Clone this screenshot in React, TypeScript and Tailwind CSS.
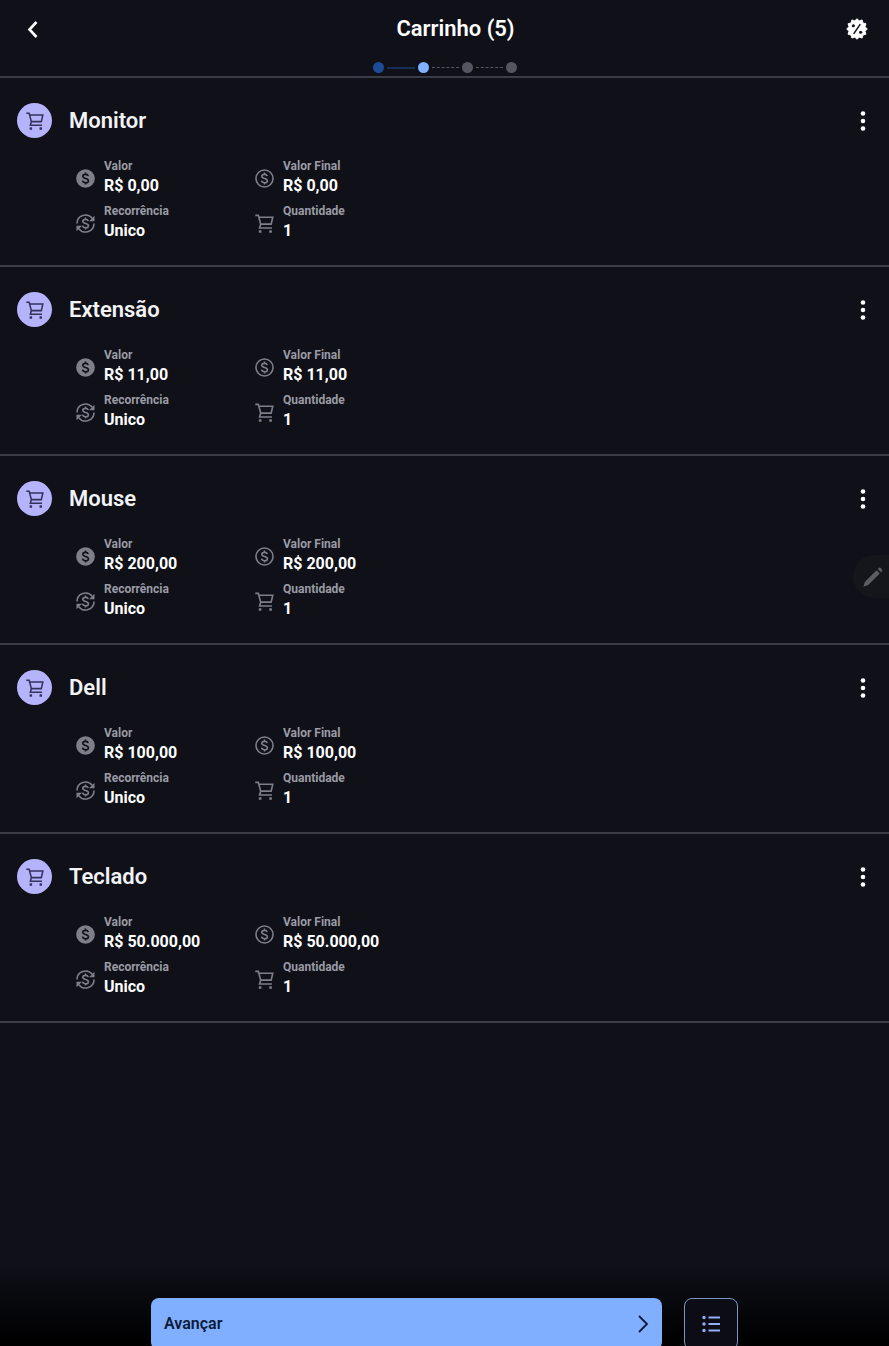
import type { ReactNode } from 'react';

interface CartItem {
  id: number;
  name: string;
  price: string;
  finalPrice: string;
  recurrence: string;
  quantity: number;
}

interface IconProps {
  className?: string;
}

const items: CartItem[] = [
  { id: 1, name: 'Monitor', price: 'R$ 0,00', finalPrice: 'R$ 0,00', recurrence: 'Unico', quantity: 1 },
  { id: 2, name: 'Extensão', price: 'R$ 11,00', finalPrice: 'R$ 11,00', recurrence: 'Unico', quantity: 1 },
  { id: 3, name: 'Mouse', price: 'R$ 200,00', finalPrice: 'R$ 200,00', recurrence: 'Unico', quantity: 1 },
  { id: 4, name: 'Dell', price: 'R$ 100,00', finalPrice: 'R$ 100,00', recurrence: 'Unico', quantity: 1 },
  { id: 5, name: 'Teclado', price: 'R$ 50.000,00', finalPrice: 'R$ 50.000,00', recurrence: 'Unico', quantity: 1 },
];

const dollar =
  'M15.5 9c-.4-1.4-1.6-2.2-3.4-2.2-2 0-3.5 1-3.5 2.5 0 1.7 1.6 2.2 3.5 2.7 2 .5 3.6 1.1 3.6 2.8 0 1.6-1.5 2.6-3.6 2.6-2 0-3.5-1-3.8-2.6M12 4.5v2.3M12 17.4v2.3';

function CartIcon({ className }: IconProps) {
  return (
    <svg viewBox="0 0 20 20" className={className} fill="none" stroke="currentColor" strokeWidth="1.7" aria-hidden="true">
      <path d="M.3 1.4h3.2L6 10.700h11l1.700-7.300H4.100" />
      <path d="M6 10.700 4.800 14.700h13" />
      <rect x="4" y="17" width="2.800" height="2.800" rx=".6" fill="currentColor" stroke="none" />
      <rect x="15" y="17" width="2.800" height="2.800" rx=".6" fill="currentColor" stroke="none" />
    </svg>
  );
}

function DollarFilledIcon({ className }: IconProps) {
  return (
    <svg viewBox="0 0 24 24" className={className} fill="none" aria-hidden="true">
      <circle cx="12" cy="12" r="11.8" fill="currentColor" />
      <path d={dollar} stroke="#0f1018" strokeWidth="2" />
    </svg>
  );
}

function DollarIcon({ className }: IconProps) {
  return (
    <svg viewBox="0 0 24 24" className={className} fill="none" stroke="currentColor" strokeWidth="2" aria-hidden="true">
      <circle cx="12" cy="12" r="10.8" />
      <path d={dollar} />
    </svg>
  );
}

function RecurrenceIcon({ className }: IconProps) {
  return (
    <svg viewBox="0 0 24 24" className={className} fill="none" stroke="currentColor" strokeWidth="2" aria-hidden="true">
      <path d="M1.2 12A10.8 10.8 0 0 1 20.5 5.5" />
      <path d="M22.8 12A10.8 10.8 0 0 1 3.5 18.5" />
      <path d="M23.4 2.2v7h-7zM.6 21.8v-7h7z" fill="currentColor" stroke="none" />
      <path d={dollar} />
    </svg>
  );
}

function DiscountIcon({ className }: IconProps) {
  return (
    <svg viewBox="0 0 24 24" className={className} aria-hidden="true">
      <path
        d="m12 .8 2.4 2.3 3.2-1 .9 3.3 3.3.9-1 3.2 2.4 2.5-2.4 2.5 1 3.2-3.3.9-.9 3.3-3.2-1-2.4 2.3-2.4-2.3-3.2 1-.9-3.3-3.3-.9 1-3.2L.8 12l2.4-2.5-1-3.2 3.3-.9.9-3.3 3.2 1z"
        fill="currentColor"
        stroke="currentColor"
        strokeLinejoin="round"
      />
      <path d="M15.6 6.6 8.4 17.4" stroke="#0f1018" strokeWidth="1.6" />
      <circle cx="8" cy="8.4" r="1.7" fill="#0f1018" />
      <circle cx="16" cy="15.6" r="1.7" fill="#0f1018" />
    </svg>
  );
}

function Steps() {
  return (
    <div className="flex items-center justify-center" role="img" aria-label="Etapa 2 de 4">
      <span className="size-[11px] rounded-full bg-[#1d4b96]" />
      <span className="mx-[3px] w-7 border-t-2 border-[#172d59]" />
      <span className="size-[11px] rounded-full bg-[#82b1ff]" />
      <span className="mx-[3px] w-[27px] border-t border-dashed border-[#55555f]" />
      <span className="size-[11px] rounded-full bg-[#55555f]" />
      <span className="mx-[3px] w-[27px] border-t border-dashed border-[#55555f]" />
      <span className="size-[11px] rounded-full bg-[#55555f]" />
    </div>
  );
}

function Detail({ icon, label, value }: { icon: ReactNode; label: string; value: string | number }) {
  return (
    <div className="flex items-center gap-[9px] text-[#7f7f8a]">
      {icon}
      <div>
        <dt className="text-xs leading-4 font-bold text-[#9b9ba5]">{label}</dt>
        <dd className="text-base leading-6 font-bold text-white">{value}</dd>
      </div>
    </div>
  );
}

function CartRow({ item }: { item: CartItem }) {
  return (
    <li className="border-b-2 border-[#3c3c46] pt-[25px] pb-[22px]">
      <div className="flex items-center pr-3 pl-[17px]">
        <span className="flex size-[35px] items-center justify-center rounded-full bg-[#b5b3fc] text-[#33335a]">
          <CartIcon className="size-[18px]" />
        </span>
        <h2 className="ml-[17px] flex-1 text-[22px] leading-7 font-semibold text-[#f3f3f6]">{item.name}</h2>
        <button type="button" aria-label={`Opções de ${item.name}`} className="flex h-7 w-7 items-center justify-center text-white">
          <svg viewBox="0 0 6 20" className="h-5 w-[6px]" fill="currentColor" aria-hidden="true">
            <circle cx="3" cy="2.5" r="2.3" />
            <circle cx="3" cy="10" r="2.3" />
            <circle cx="3" cy="17.5" r="2.3" />
          </svg>
        </button>
      </div>
      <dl className="mt-5 ml-[76px] grid max-w-[358px] grid-cols-2 gap-y-[5px]">
        <Detail icon={<DollarFilledIcon className="size-[19px]" />} label="Valor" value={item.price} />
        <Detail icon={<DollarIcon className="size-[19px]" />} label="Valor Final" value={item.finalPrice} />
        <Detail icon={<RecurrenceIcon className="size-[19px]" />} label="Recorrência" value={item.recurrence} />
        <Detail icon={<CartIcon className="size-[19px]" />} label="Quantidade" value={item.quantity} />
      </dl>
    </li>
  );
}

function App() {
  return (
    <div className="min-h-screen bg-[#0f1018] pb-20 font-['Roboto',sans-serif] text-white">
      <header className="border-b-2 border-[#3c3c46] pt-3 pb-[3px]">
        <div className="flex items-center justify-between px-[21px]">
          <button type="button" aria-label="Voltar" className="flex h-[34px] w-6 items-center justify-center">
            <svg viewBox="0 0 12 18" className="h-[18px] w-3" fill="none" stroke="currentColor" strokeWidth="2.6" aria-hidden="true">
              <path d="m9.500 2-7 7.500 7 7.500" />
            </svg>
          </button>
          <h1 className="ml-5 text-[22px] leading-[34px] font-semibold">Carrinho (5)</h1>
          <button type="button" aria-label="Desconto" className="flex h-[34px] items-center">
            <DiscountIcon className="size-[22px]" />
          </button>
        </div>
        <div className="mt-4">
          <Steps />
        </div>
      </header>

      <main>
        <ul>
          {items.map((item) => (
            <CartRow key={item.id} item={item} />
          ))}
        </ul>
      </main>

      {/* Floating edit handle, tucked into the right edge */}
      <button
        type="button"
        aria-label="Editar"
        className="fixed top-[555px] right-0 flex h-[43px] w-9 items-center justify-center rounded-l-full bg-[#15161c] pl-1 text-[#5c5c62]"
      >
        <svg viewBox="0 0 20 20" className="size-5" fill="currentColor" aria-hidden="true">
          <path d="M.3 19.700 2 14.800 13.600 3.200l3.200 3.200L5.200 18zM14.700 2.100l1-1a1.500 1.500 0 0 1 2.100 0l1.100 1.100a1.500 1.500 0 0 1 0 2.100l-1 1z" />
        </svg>
      </button>

      <footer className="fixed inset-x-0 bottom-0 h-20 overflow-hidden bg-linear-to-b from-transparent to-black pt-8">
        <div className="mx-auto flex max-w-[587px] gap-[22px]">
          <button
            type="button"
            className="flex h-[52px] flex-1 items-center justify-between rounded-lg bg-[#80afff] px-[13px] text-base font-semibold text-[#0c1a3a]"
          >
            Avançar
            <svg viewBox="0 0 12 20" className="h-5 w-3" fill="none" stroke="currentColor" strokeWidth="1.8" aria-hidden="true">
              <path d="m2 2 8 8-8 8" />
            </svg>
          </button>
          <button
            type="button"
            aria-label="Lista"
            className="flex h-[52px] w-[54px] items-center justify-center rounded-lg border border-[#7d94c8] bg-[#0c0d14] text-[#8fb0f5]"
          >
            <svg viewBox="0 0 18 18" className="size-[18px]" fill="currentColor" aria-hidden="true">
              <circle cx="2" cy="2.5" r="1.7" />
              <circle cx="2" cy="9" r="1.7" />
              <circle cx="2" cy="15.5" r="1.7" />
              <path d="M6.5 1.5H18v2H6.5zM6.5 8H18v2H6.5zM6.5 14.5H18v2H6.5z" />
            </svg>
          </button>
        </div>
      </footer>
    </div>
  );
}

export default App;
